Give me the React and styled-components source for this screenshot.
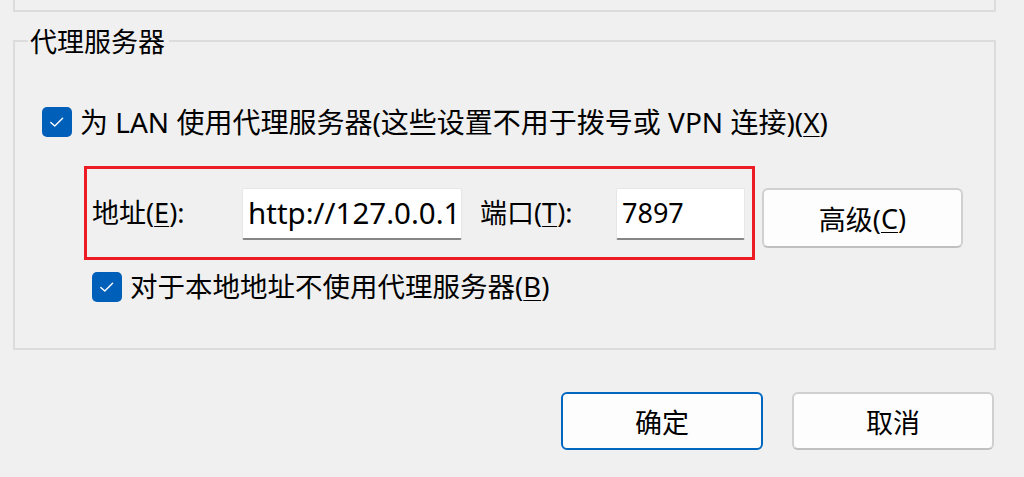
import React from "react";
import styled, { createGlobalStyle } from "styled-components";

const GlobalStyle = createGlobalStyle`
    body {
        margin: 0;
        background: #f0f0f0;
        font-family: "Noto Sans", "Noto Sans CJK SC", sans-serif;
        color: #000;
    }
`;

function Check() {
    return (
        <CheckBox>
            <svg width="20" height="20" viewBox="0 0 20 20">
                <path d="M3.8 10.4 L7.8 14 L15.6 6.2" fill="none" stroke="#fff" strokeWidth="1.4" strokeLinecap="round" strokeLinejoin="round" />
            </svg>
        </CheckBox>
    );
}

export default function App() {
    return (
        <Page>
            <GlobalStyle />
            <PrevGroup />

            <Group>
                <Legend>代理服务器</Legend>

                <GroupBody>
                    <CheckRow>
                        <Check />
                        <span>为 LAN 使用代理服务器(这些设置不用于拨号或 VPN 连接)(<U>X</U>)</span>
                    </CheckRow>

                    <ProxyLine>
                        <RedBox>
                            <FieldLabel $w="150px">地址(<U>E</U>):</FieldLabel>
                            <TextInput $w="220px" $fs="29.5px">http://127.0.0.1</TextInput>
                            <FieldLabel $w="136px" $ml="18px">端口(<U>T</U>):</FieldLabel>
                            <TextInput $w="129px" $fs="27px">7897</TextInput>
                        </RedBox>
                        <Button $w="201px" $h="60px" $mt="22px">高级(<U>C</U>)</Button>
                    </ProxyLine>

                    <CheckRow $ml="50px" $mt="12px" $fs="27.5px">
                        <Check />
                        <span>对于本地地址不使用代理服务器(<U>B</U>)</span>
                    </CheckRow>
                </GroupBody>
            </Group>

            <Footer>
                <Button $w="202px" $h="58px" $primary>确定</Button>
                <Button $w="202px" $h="58px">取消</Button>
            </Footer>
        </Page>
    );
}

const Page = styled.div`
    width: 1024px;
    height: 477px;
    overflow: hidden;
    box-sizing: border-box;
    padding: 0 28px 0 13px;
    font-size: 28px;
`;

const PrevGroup = styled.div`
    height: 10px;
    border: 2px solid #dcdcdc;
    border-top: 0;
`;

const Group = styled.fieldset`
    margin: 16px 0 0 0;
    padding: 0;
    border: 2px solid #dcdcdc;
    min-width: 0;
`;

const Legend = styled.legend`
    margin-left: 13px;
    padding: 0 4px 0 2px;
    font-family: "Noto Sans CJK SC", sans-serif;
    font-size: 27px;
    line-height: 26px;
    height: 26px;
`;

const GroupBody = styled.div`
    padding: 0 0 46px 27px;
`;

const CheckRow = styled.div`
    display: flex;
    align-items: center;
    gap: 8px;
    margin-top: ${p => p.$mt || "53px"};
    margin-left: ${p => p.$ml || "0"};
    font-size: ${p => p.$fs || "28px"};
    line-height: 30px;
    white-space: nowrap;
`;

const CheckBox = styled.span`
    width: 30px;
    height: 30px;
    flex: none;
    border-radius: 5px;
    background: #005fb8;
    display: flex;
    align-items: center;
    justify-content: center;
`;

const U = styled.span`
    text-decoration: underline;
    text-underline-offset: 3px;
    text-decoration-thickness: 1px;
`;

const ProxyLine = styled.div`
    display: flex;
    align-items: flex-start;
    gap: 7px;
    margin: 29px 0 0 42px;
`;

const RedBox = styled.div`
    width: 671px;
    height: 94px;
    box-sizing: border-box;
    border: 3px solid #ed1c24;
    display: flex;
    align-items: center;
    padding: 0 7px 0 5px;
    font-size: 27px;
`;

const FieldLabel = styled.span`
    width: ${p => p.$w};
    margin-left: ${p => p.$ml || "0"};
    flex: none;
    white-space: nowrap;
    line-height: 30px;
`;

const TextInput = styled.div`
    width: ${p => p.$w};
    height: 52px;
    box-sizing: border-box;
    flex: none;
    background: #fff;
    border: 1px solid #e6e6e6;
    border-bottom: 2px solid #868686;
    border-radius: 2px;
    padding: 0 5px 2px;
    display: flex;
    align-items: center;
    overflow: hidden;
    white-space: nowrap;
    font-family: "Noto Sans", sans-serif;
    font-size: ${p => p.$fs};
    margin-top: 1px;
`;

const Button = styled.div`
    width: ${p => p.$w};
    height: ${p => p.$h};
    box-sizing: border-box;
    flex: none;
    margin-top: ${p => p.$mt || "0"};
    background: #fdfdfd;
    border: 2px solid ${p => (p.$primary ? "#0067c0" : "#d0d0d0")};
    border-bottom-color: ${p => (p.$primary ? "#0067c0" : "#c0c0c0")};
    border-radius: 6px;
    display: flex;
    align-items: center;
    justify-content: center;
    white-space: nowrap;
    font-size: 27px;
`;

const Footer = styled.div`
    display: flex;
    justify-content: flex-end;
    gap: 29px;
    margin-top: 42px;
    padding-right: 2px;
`;
